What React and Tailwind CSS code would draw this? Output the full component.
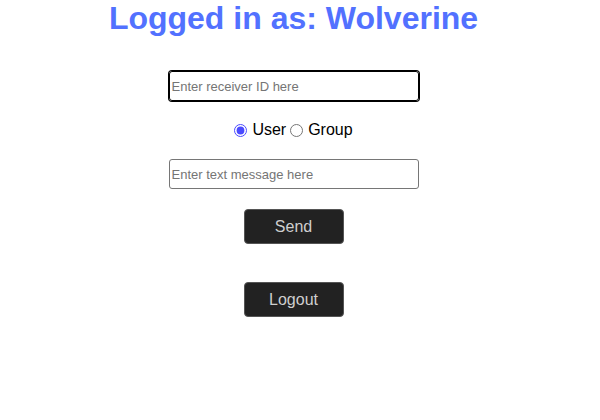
import React, { useState } from "react";

const App = () => {
    const [receiver, setReceiver] = useState("");
    const [type, setType] = useState("user");
    const [message, setMessage] = useState("");

    return (
        <div className="w-[587px] h-[420px] bg-white flex flex-col items-center font-['Liberation_Sans',Arial,sans-serif]">
            <h1 className="text-[32px] leading-[37px] font-bold text-[#5271ff]">Logged in as: Wolverine</h1>

            <input
                autoFocus
                type="text"
                value={receiver}
                onChange={(e) => setReceiver(e.target.value)}
                placeholder="Enter receiver ID here"
                className="mt-[34px] w-[250px] h-[30px] px-[2px] text-[13px] border border-[#767676] rounded-[3px] outline-none focus:border-black focus:ring-1 focus:ring-black placeholder:text-[#757575]"
            />

            <div className="mt-[19px] h-[20px] flex items-center text-[16px] text-black">
                <input
                    type="radio"
                    name="type"
                    id="user"
                    checked={type === "user"}
                    onChange={() => setType("user")}
                    className="w-[13px] h-[13px] mr-[5px] accent-[#4a4aff]"
                />
                <label htmlFor="user">User</label>
                <input
                    type="radio"
                    name="type"
                    id="group"
                    checked={type === "group"}
                    onChange={() => setType("group")}
                    className="w-[13px] h-[13px] ml-[4px] mr-[5px]"
                />
                <label htmlFor="group">Group</label>
            </div>

            <input
                type="text"
                value={message}
                onChange={(e) => setMessage(e.target.value)}
                placeholder="Enter text message here"
                className="mt-[19px] w-[250px] h-[30px] px-[2px] text-[13px] border border-[#767676] rounded-[3px] outline-none placeholder:text-[#757575]"
            />

            <button className="mt-[20px] w-[100px] h-[35px] bg-[#222222] text-[#cfcfcf] text-[16px] rounded-[4px] border border-[#555]">
                Send
            </button>

            <button className="mt-[38px] w-[100px] h-[35px] bg-[#222222] text-[#cfcfcf] text-[16px] rounded-[4px] border border-[#555]">
                Logout
            </button>
        </div>
    );
};

export default App;
